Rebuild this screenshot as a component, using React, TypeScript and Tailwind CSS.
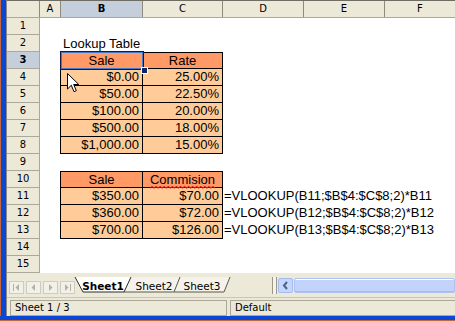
import React from 'react';

const lookup = [
  ['$0.00', '25.00%'],
  ['$50.00', '22.50%'],
  ['$100.00', '20.00%'],
  ['$500.00', '18.00%'],
  ['$1,000.00', '15.00%'],
];

const sales = [
  ['$350.00', '$70.00', 'B11'],
  ['$360.00', '$72.00', 'B12'],
  ['$700.00', '$126.00', 'B13'],
];

type Kind = 'plain' | 'head' | 'body';

type RowDef = {
  kind: Kind;
  first?: boolean;
  b?: React.ReactNode;
  c?: React.ReactNode;
  d?: string;
  title?: string;
};

// red spell-check squiggle under a word
function Misspelled({ children }: { children: React.ReactNode }) {
  return (
    <span className="relative inline-block">
      {children}
      <svg className="absolute left-0 bottom-[-1px]" width="100%" height="3" preserveAspectRatio="none" viewBox="0 0 64 3">
        <path
          d="M0 2 L2 0.5 L4 2 L6 0.5 L8 2 L10 0.5 L12 2 L14 0.5 L16 2 L18 0.5 L20 2 L22 0.5 L24 2 L26 0.5 L28 2 L30 0.5 L32 2 L34 0.5 L36 2 L38 0.5 L40 2 L42 0.5 L44 2 L46 0.5 L48 2 L50 0.5 L52 2 L54 0.5 L56 2 L58 0.5 L60 2 L62 0.5 L64 2"
          fill="none"
          stroke="#e01818"
          strokeWidth="1"
        />
      </svg>
    </span>
  );
}

function buildRows(): RowDef[] {
  const rows: RowDef[] = [];
  for (let n = 1; n <= 15; n++) rows.push({ kind: 'plain' });
  rows[1] = { kind: 'plain', title: 'Lookup Table' };
  rows[2] = { kind: 'head', first: true, b: 'Sale', c: 'Rate' };
  lookup.forEach(([s, r], i) => {
    rows[3 + i] = { kind: 'body', b: s, c: r };
  });
  rows[9] = { kind: 'head', first: true, b: 'Sale', c: <Misspelled>Commision</Misspelled> };
  sales.forEach(([s, c, ref], i) => {
    rows[10 + i] = { kind: 'body', b: s, c, d: `=VLOOKUP(${ref};$B$4:$C$8;2)*${ref}` };
  });
  return rows;
}

function ColHeader() {
  const cols = [
    { l: 'A', w: 'w-[21px]' },
    { l: 'B', w: 'w-[82px]', on: true },
    { l: 'C', w: 'w-[80px]' },
    { l: 'D', w: 'w-[81px]' },
    { l: 'E', w: 'w-[81px]' },
  ];
  return (
    <div className="flex h-[18px] border-t border-b border-t-[#6f6d63] border-b-[#aca899] bg-[#ece9d8] font-['DejaVu_Sans',sans-serif] text-[10px] leading-[16px]">
      <div className="w-[33px] border-r border-[#8e8b7e]" />
      {cols.map((c) => (
        <div
          key={c.l}
          className={`${c.w} shrink-0 border-r border-[#8e8b7e] text-center ${c.on ? 'bg-[#c5cfdb] font-bold' : ''}`}
        >
          {c.l}
        </div>
      ))}
      <div className="flex-1 text-center">F</div>
    </div>
  );
}

function GridRow({ n, row }: { n: number; row: RowDef }) {
  const inTable = row.kind !== 'plain';
  const bg = row.kind === 'head' ? 'bg-[#ff9966]' : 'bg-[#ffcc99]';
  const align = row.kind === 'head' ? 'text-center' : 'text-right pr-[3px]';
  const top = row.first ? 'border-t' : '';
  return (
    <div className="flex h-[17px] text-[13px] leading-[16px] text-black">
      <div
        className={`w-[33px] shrink-0 border-r border-b border-[#aca899] text-center font-['DejaVu_Sans',sans-serif] text-[10px] leading-[16px] ${
          n === 3 ? 'bg-[#c5cfdb] font-bold' : 'bg-[#ece9d8]'
        }`}
      >
        {n}
      </div>
      <div className={`w-[21px] shrink-0 ${inTable ? 'border-r border-black' : ''}`} />
      {inTable ? (
        <>
          <div className={`w-[82px] shrink-0 border-r border-b border-black ${top} ${bg} ${align} whitespace-nowrap`}>
            {row.b}
          </div>
          <div className={`w-[80px] shrink-0 border-r border-b border-black ${top} ${bg} ${align} whitespace-nowrap`}>
            {row.c}
          </div>
        </>
      ) : (
        <>
          <div className="w-[82px] shrink-0 pl-[2px] whitespace-nowrap leading-[18px]">{row.title}</div>
          <div className="w-[80px] shrink-0" />
        </>
      )}
      <div className="w-[81px] shrink-0 pl-[1px] whitespace-nowrap">{row.d}</div>
      <div className="w-[81px] shrink-0" />
      <div className="flex-1" />
    </div>
  );
}

function NavButton({ dir }: { dir: 'first' | 'prev' | 'next' | 'last' }) {
  return (
    <div className="w-[15px] h-[13px] border border-[#cfccbe] bg-[#f1f0e9] flex items-center justify-center">
      <svg width="9" height="7" viewBox="0 0 9 7">
        {dir === 'first' && (
          <>
            <rect x="1" y="0" width="1" height="7" fill="#b4b1a4" />
            <path d="M7 0 L7 7 L3.5 3.5 Z" fill="#b4b1a4" />
          </>
        )}
        {dir === 'prev' && <path d="M6 0 L6 7 L2.5 3.5 Z" fill="#b4b1a4" />}
        {dir === 'next' && <path d="M3 0 L3 7 L6.5 3.5 Z" fill="#b4b1a4" />}
        {dir === 'last' && (
          <>
            <path d="M2 0 L2 7 L5.5 3.5 Z" fill="#b4b1a4" />
            <rect x="7" y="0" width="1" height="7" fill="#b4b1a4" />
          </>
        )}
      </svg>
    </div>
  );
}

function SheetTabs() {
  return (
    <div className="relative ml-[-1px] w-[158px] h-[24px] font-['DejaVu_Sans',sans-serif] text-[10.5px]">
      <svg className="absolute inset-0" width="158" height="24" viewBox="0 0 158 24">
        <path d="M106 4 L100 19 L150 19 L156 4 Z" fill="#f4f2ea" />
        <path d="M100 19 L150 19 L156 4" fill="none" stroke="#5a5850" strokeWidth="1" />
        <path d="M57 4 L50 19 L100 19 L106 4 Z" fill="#f4f2ea" />
        <path d="M50 19 L100 19 L106 4" fill="none" stroke="#5a5850" strokeWidth="1" />
        <path d="M1 4 L9 19 L50 19 L57 4 Z" fill="#ffffff" />
        <path d="M1 4 L9 19 L50 19 L57 4" fill="none" stroke="#2a2a2a" strokeWidth="1" />
      </svg>
      <div className="relative flex pt-[7px] leading-[12px] text-black">
        <div className="w-[58px] text-center font-bold">Sheet1</div>
        <div className="w-[44px] text-center">Sheet2</div>
        <div className="w-[52px] text-center">Sheet3</div>
      </div>
    </div>
  );
}

function TabBar() {
  return (
    <div className="flex h-[24px] bg-[#ece9d8] items-start">
      <div className="ml-[2px] mt-[8px] flex gap-[2px]">
        <NavButton dir="first" />
        <NavButton dir="prev" />
        <NavButton dir="next" />
        <NavButton dir="last" />
      </div>
      <SheetTabs />
      <div className="ml-[40px] mt-[4px] w-[5px] h-[17px] border-x border-[#9a978a] bg-[#f4f2ea]" />
      <div className="ml-[1px] mt-[5px] w-[15px] h-[15px] rounded-[2px] border border-[#a4bbef] bg-[#c6d6fc] flex items-center justify-center">
        <svg width="7" height="9" viewBox="0 0 7 9">
          <path d="M5 1 L2 4.5 L5 8" fill="none" stroke="#4d6185" strokeWidth="2" />
        </svg>
      </div>
      <div className="ml-[1px] mt-[5px] flex-1 h-[15px] rounded-[2px] border border-[#aec2f3] bg-[#c3d3fc] shadow-[inset_0_1px_0_#ffffff,inset_0_-1px_0_#a9b9ea]" />
    </div>
  );
}

function StatusBar() {
  return (
    <div className="flex h-[19px] border-t border-[#c9c6b6] bg-[#ece9d8] font-['DejaVu_Sans',sans-serif] text-[10px] leading-[14px]">
      <div className="ml-[3px] mt-[2px] w-[217px] h-[16px] border border-[#aca899] pl-[4px] text-black">Sheet 1 / 3</div>
      <div className="ml-[3px] mt-[2px] flex-1 h-[16px] border border-r-0 border-[#aca899] pl-[4px] text-black">Default</div>
    </div>
  );
}

export default function App() {
  const rows = buildRows();
  return (
    <div className="relative w-[455px] h-[321px] overflow-hidden bg-white font-['Liberation_Sans',Arial,sans-serif] flex flex-col">
      <div className="flex h-[316px]">
        <div className="w-[1px] shrink-0 bg-[#c8643a]" />
        <div className="w-[5px] shrink-0 bg-[#0b47d6]" />
        <div className="w-[1px] shrink-0 bg-[#8c8a80]" />
        <div className="flex-1 flex flex-col min-w-0 bg-white">
          <ColHeader />
          {rows.map((r, i) => (
            <GridRow key={i} n={i + 1} row={r} />
          ))}
          <TabBar />
          <StatusBar />
        </div>
      </div>
      <div className="h-[4px] bg-[#0b47d6]" />
      <div className="h-[1px] bg-[#c8643a]" />

      {/* selected cell B3 */}
      <div className="absolute left-[60px] top-[51px] w-[84px] h-[19px] border border-[#0a1a4a] shadow-[inset_0_0_0_1px_#4a78c8]" />
      <div className="absolute left-[141px] top-[67px] w-[5px] h-[5px] bg-[#0a246a] border border-white box-content" />

      {/* mouse pointer */}
      <svg className="absolute left-[67px] top-[73px]" width="13" height="21" viewBox="0 0 13 21">
        <path d="M0.5 0.5 L0.5 16 L4.3 12.3 L7 18.7 L9.3 17.7 L6.7 11.5 L11.8 11.5 Z" fill="#ffffff" stroke="#000000" strokeWidth="1" strokeLinejoin="round" />
      </svg>
    </div>
  );
}
